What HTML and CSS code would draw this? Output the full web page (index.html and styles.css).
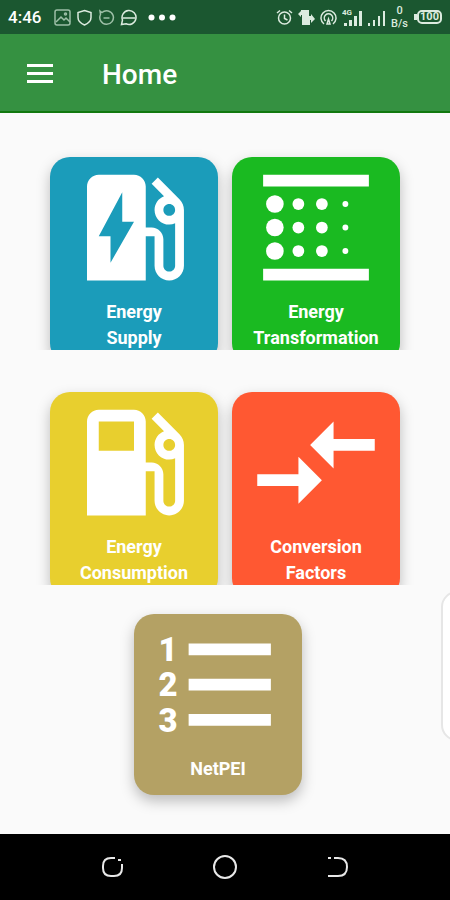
FILE: index.html
```html
<!DOCTYPE html>
<html lang="en">
<head>
  <meta charset="UTF-8" />
  <meta name="viewport" content="width=device-width, initial-scale=1.0"/>
  <title>Home</title>
  <link rel="stylesheet" href="styles.css">
</head>
<body>
  <div class="status-bar">
    <span class="clock">4:46</span>
    <div class="notifications">
      <svg width="17" height="17" viewBox="0 0 17 17" class="line dim">
        <rect x="1" y="1" width="15" height="15" rx="2"/>
        <path d="M2 13l5-5 3 3 2-2 4 4"/>
        <circle cx="11.500" cy="5" r="1"/>
      </svg>
      <svg width="17" height="17" viewBox="0 0 17 17" class="line">
        <path d="M8.500 1.500L15 3.500v5c0 3.500-3 6-6.500 7.500C5 14.500 2 12 2 8.500v-5z"/>
      </svg>
      <svg width="17" height="17" viewBox="0 0 17 17" class="line dim">
        <path d="M2 2l2 1.500a6.800 6.800 0 1 1-1.500 2z"/>
        <path d="M5.500 9h6"/>
      </svg>
      <svg width="18" height="17" viewBox="0 0 18 17" class="line">
        <path d="M1.500 15.500l1-4.500a7 7 0 1 1 3.500 3.800z"/>
        <path d="M2.500 9h13"/>
      </svg>
      <svg width="28" height="17" viewBox="0 0 28 17" class="solid">
        <circle cx="3.500" cy="8.500" r="3"/>
        <circle cx="14" cy="8.500" r="3"/>
        <circle cx="24.500" cy="8.500" r="3"/>
      </svg>
    </div>
    <div class="system">
      <svg width="17" height="17" viewBox="0 0 17 17" class="line">
        <circle cx="8.500" cy="9" r="6"/>
        <path d="M8.500 5.500V9.500l3 1.500M1 4l3-2.500M16 4l-3-2.500"/>
      </svg>
      <svg width="17" height="17" viewBox="0 0 17 17" class="solid">
        <path d="M3 1h8v6h2V5l4 5-4 4v-3h-1v5H4V6H3v2L0 5l3-3z"/>
      </svg>
      <svg width="17" height="17" viewBox="0 0 17 17" class="line">
        <path d="M4 15a7.500 7.500 0 1 1 9 0"/>
        <path d="M5.500 12a4.200 4.200 0 1 1 6 0"/>
        <path d="M7 15l1.500-5 1.500 5z"/>
      </svg>
      <svg width="20" height="19" viewBox="0 0 20 19" class="solid">
        <text x="0" y="7" class="net-label">4G</text>
        <path d="M2 15h3v3H2zM7 12h3v6H7zM12 8h3v10h-3zM17 3h3v15h-3z"/>
      </svg>
      <svg width="19" height="19" viewBox="0 0 19 19" class="solid">
        <path d="M1 15h2v3H1zM6 12h2v6H6zM11 8h2v10h-2zM16 3h2v15h-2z"/>
      </svg>
      <div class="speed">
        <span>0</span>
        <span>B/s</span>
      </div>
      <span class="battery">100</span>
    </div>
  </div>

  <header class="app-bar">
    <button class="menu-button" aria-label="Menu">
      <svg width="26" height="20" viewBox="0 0 26 20" class="solid">
        <path d="M0 0h26v3H0zM0 8h26v3H0zM0 16h26v3H0z"/>
      </svg>
    </button>
    <h1>Home</h1>
  </header>

  <main class="content">
    <div class="card-row">
      <button class="card supply">
        <svg class="card-icon" viewBox="0 0 24 24">
          <path d="M19.770 7.230l.01-.01-3.720-3.720L15 4.560l2.110 2.110c-.94.36-1.610 1.260-1.610 2.330 0 1.380 1.120 2.500 2.500 2.500.36 0 .69-.08 1-.21v7.210c0 .55-.45 1-1 1s-1-.45-1-1V14c0-1.100-.9-2-2-2h-1V5c0-1.100-.9-2-2-2H6c-1.100 0-2 .9-2 2v16h10v-7.500h1.500v5c0 1.380 1.120 2.500 2.500 2.500s2.500-1.120 2.500-2.500V9c0-.69-.28-1.320-.73-1.770zM18 10c-.55 0-1-.45-1-1s.45-1 1-1 1 .45 1 1-.45 1-1 1zM8 18v-4.500H6L10 6v5h2l-4 7z"/>
        </svg>
        <span>Energy<br>Supply</span>
      </button>
      <button class="card transformation">
        <svg class="card-icon" viewBox="0 0 24 24">
          <path d="M3 3h18v2H3zM3 19h18v2H3z"/>
          <circle cx="5" cy="8" r="1.500"/>
          <circle cx="5" cy="12" r="1.500"/>
          <circle cx="5" cy="16" r="1.500"/>
          <circle cx="9" cy="8" r="1"/>
          <circle cx="9" cy="12" r="1"/>
          <circle cx="9" cy="16" r="1"/>
          <circle cx="13" cy="8" r="1"/>
          <circle cx="13" cy="12" r="1"/>
          <circle cx="13" cy="16" r="1"/>
          <circle cx="17" cy="8" r=".5"/>
          <circle cx="17" cy="12" r=".5"/>
          <circle cx="17" cy="16" r=".5"/>
        </svg>
        <span>Energy<br>Transformation</span>
      </button>
    </div>

    <div class="card-row">
      <button class="card consumption">
        <svg class="card-icon" viewBox="0 0 24 24">
          <path d="M19.770 7.230l.01-.01-3.720-3.720L15 4.560l2.110 2.110c-.94.36-1.610 1.260-1.610 2.330 0 1.380 1.120 2.500 2.500 2.500.36 0 .69-.08 1-.21v7.210c0 .55-.45 1-1 1s-1-.45-1-1V14c0-1.100-.9-2-2-2h-1V5c0-1.100-.9-2-2-2H6c-1.100 0-2 .9-2 2v16h10v-7.500h1.500v5c0 1.380 1.120 2.500 2.500 2.500s2.500-1.120 2.500-2.500V9c0-.69-.28-1.320-.73-1.770zM12 10H6V5h6v5zm6 0c-.55 0-1-.45-1-1s.45-1 1-1 1 .45 1 1-.45 1-1 1z"/>
        </svg>
        <span>Energy<br>Consumption</span>
      </button>
      <button class="card conversion">
        <svg class="card-icon" viewBox="0 0 24 24">
          <path d="M9.010 14H2v2h7.010v3L13 15l-3.990-4v3zm5.980-1v-3H22V8h-7.010V5L11 9l3.990 4z"/>
        </svg>
        <span>Conversion<br>Factors</span>
      </button>
    </div>

    <div class="last-row">
      <button class="card netpei">
        <svg class="card-icon" viewBox="0 0 24 24">
          <g class="list-number">
            <text x="3.500" y="8">1</text>
            <text x="3.500" y="14">2</text>
            <text x="3.500" y="20">3</text>
          </g>
          <path d="M7 5h14v2H7zM7 11h14v2H7zM7 17h14v2H7z"/>
        </svg>
        <span>NetPEI</span>
      </button>
    </div>

    <div class="edge-panel"></div>
  </main>

  <nav class="nav-bar">
    <button aria-label="Recent apps">
      <svg width="24" height="24" viewBox="0 0 24 24" class="line thick">
        <path d="M14 3H10Q2 3 2 11v2q0 8 8 8h3q8 0 8-8V9"/>
        <path d="M17 5h3"/>
      </svg>
    </button>
    <button aria-label="Home screen">
      <svg width="24" height="24" viewBox="0 0 24 24" class="line thick">
        <circle cx="12" cy="12" r="11"/>
      </svg>
    </button>
    <button aria-label="Back">
      <svg width="24" height="24" viewBox="0 0 24 24" class="line thick">
        <path d="M9 3h4q9 0 9 9t-9 9H3M3 3h3"/>
      </svg>
    </button>
  </nav>
</body>
</html>
```

FILE: styles.css
```css
* {
  box-sizing: border-box;
}

body {
  margin: 0;
  min-height: 100vh;
  display: flex;
  flex-direction: column;
  background: #fafafa;
  font-family: Roboto, sans-serif;
  color: #fff;
}

h1 {
  margin: 0;
  font-size: 28px;
  font-weight: 500;
}

button {
  padding: 0;
  border: none;
  background: none;
  color: inherit;
  font-family: inherit;
  cursor: pointer;
}

svg {
  display: block;
}

.line {
  fill: none;
  stroke: #dcebdf;
  stroke-width: 1.5;
}

.dim {
  stroke: #9dbfa7;
}

.thick {
  stroke: #e8e8e8;
  stroke-width: 2;
}

.solid {
  fill: #fff;
}

/* status bar */
.status-bar {
  display: flex;
  align-items: center;
  height: 34px;
  padding: 0 8px;
  background: #1b5730;
}

.clock {
  font-size: 17px;
  font-weight: 500;
}

.notifications {
  display: flex;
  align-items: center;
  gap: 5px;
  margin-left: 13px;
}

.notifications .solid {
  margin-left: 5px;
}

.system {
  display: flex;
  align-items: center;
  gap: 5px;
  margin-left: auto;
}

.system .solid {
  fill: #dcebdf;
}

.net-label {
  font-size: 8px;
  font-weight: 700;
}

.speed {
  display: flex;
  flex-direction: column;
  align-items: center;
  gap: 1px;
  color: #dcebdf;
  font-size: 11px;
  font-weight: 500;
  line-height: 12px;
}

.battery {
  position: relative;
  width: 25px;
  height: 14px;
  margin-left: 4px;
  border: 2px solid #dcebdf;
  border-radius: 5px;
  color: #dcebdf;
  font-size: 11px;
  font-weight: 700;
  line-height: 10px;
  text-align: center;
}

.battery::before {
  content: "";
  position: absolute;
  left: -5px;
  top: 2px;
  width: 3px;
  height: 6px;
  background: #dcebdf;
}

/* app bar */
.app-bar {
  display: flex;
  align-items: center;
  gap: 49px;
  height: 79px;
  padding: 3px 27px 0;
  background: #359141;
  border-bottom: 2px solid #11790f;
}

/* cards */
.content {
  position: relative;
  flex: 1;
  padding-top: 20px;
  overflow: hidden;
}

.card-row {
  display: grid;
  grid-template-columns: 1fr 1fr;
  align-items: start;
  gap: 14px;
  height: 217px;
  padding: 24px 50px 0;
  margin-bottom: 18px;
  overflow: hidden;
}

.last-row {
  display: flex;
  justify-content: center;
  padding: 11px 14px 0 0;
}

.card {
  display: flex;
  flex-direction: column;
  align-items: center;
  gap: 1px;
  height: 206px;
  border-radius: 20px;
  box-shadow: 0 6px 14px rgba(0, 0, 0, 0.25);
  font-size: 18px;
  font-weight: 700;
  line-height: 26px;
}

.card-icon {
  width: 142px;
  height: 141px;
  fill: #fff;
}

.supply {
  background: #1b9cba;
}

.transformation {
  background: #1aba21;
}

.consumption {
  background: #e8cf2e;
}

.conversion {
  background: #ff5832;
}

.netpei {
  width: 168px;
  height: 181px;
  background: #b4a164;
}

.list-number {
  font-size: 5.6px;
  font-weight: 900;
  text-anchor: middle;
}

.edge-panel {
  position: absolute;
  right: -24px;
  top: 478px;
  width: 33px;
  height: 150px;
  background: #fff;
  border: 2px solid #e6e6e6;
  border-radius: 16px;
}

/* navigation bar */
.nav-bar {
  display: flex;
  justify-content: center;
  align-items: center;
  gap: 88px;
  height: 66px;
  background: #000;
}
```
